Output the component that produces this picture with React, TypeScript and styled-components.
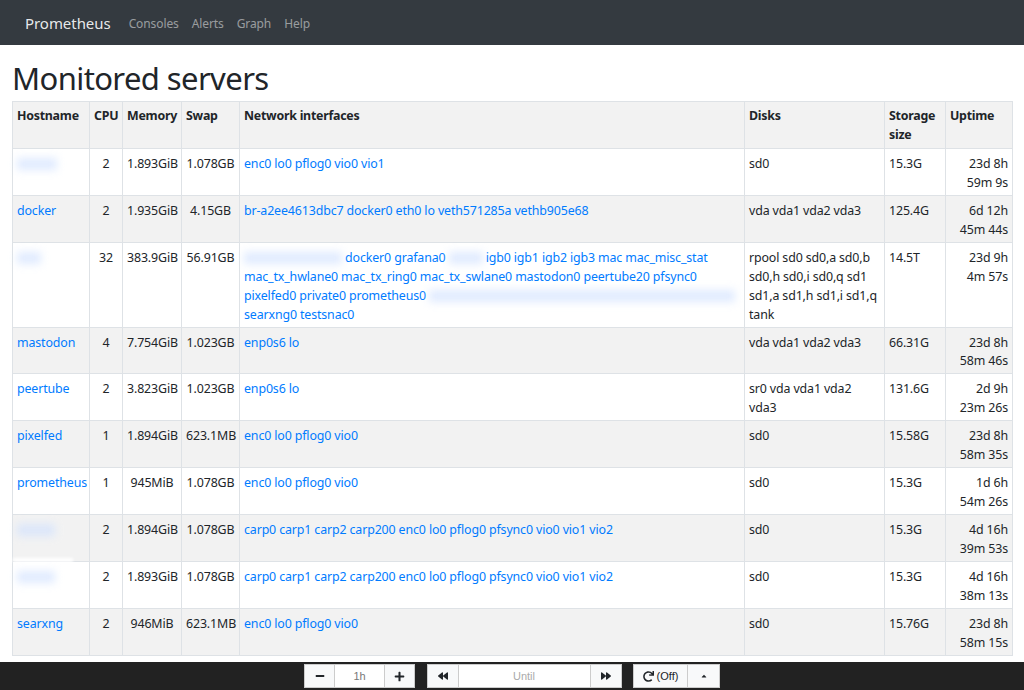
import React from "react";
import styled, { createGlobalStyle } from "styled-components";
import { FaBackward, FaCaretUp, FaForward, FaMinus, FaPlus, FaRedo } from "react-icons/fa";

const GlobalStyle = createGlobalStyle`
    html, body {
        margin: 0;
        padding: 0;
        background: #fff;
    }
    body {
        font-family: "Noto Sans", "Open Sans", sans-serif;
        font-size: 12.4px;
        letter-spacing: -0.13px;
        line-height: 18.95px;
        color: #212529;
    }
`;

const Page = styled.div`
    height: 690px;
    display: flex;
    flex-direction: column;
    overflow: hidden;
`;

const Navbar = styled.nav`
    flex: 0 0 45px;
    box-sizing: border-box;
    background: #343a40;
    display: flex;
    align-items: center;
    padding: 3px 25px 0;
`;

const Brand = styled.a`
    color: rgba(255, 255, 255, 0.9);
    font-size: 15px;
    letter-spacing: -0.05px;
    text-decoration: none;
    margin-right: 18px;
    padding-bottom: 1px;
`;

const NavLink = styled.a`
    color: rgba(255, 255, 255, 0.5);
    font-size: 12px;
    letter-spacing: -0.1px;
    text-decoration: none;
    margin-right: 13px;
`;

const Main = styled.main`
    flex: 1;
    min-height: 0;
    padding: 0 12px;
`;

const Title = styled.h1`
    margin: 0;
    height: 56px;
    font-size: 31px;
    letter-spacing: -0.6px;
    font-weight: 400;
    line-height: 66px;
`;

const Table = styled.table`
    width: 1000px;
    table-layout: fixed;
    border-collapse: collapse;
    border: 1px solid #dee2e6;

    tbody tr:nth-child(even) {
        background: #f2f2f2;
    }
`;

const HeadRow = styled.tr`
    background: #f2f2f2;
`;

const Th = styled.th`
    padding: 5px 4px 3px;
    border: 1px solid #dee2e6;
    text-align: left;
    vertical-align: top;
    font-weight: 700;
    letter-spacing: -0.25px;
`;

const Td = styled.td<{ $align?: string }>`
    position: relative;
    padding: 6px 4px 2px;
    border: 1px solid #dee2e6;
    vertical-align: top;
    text-align: ${(p) => p.$align || "left"};
`;

const Link = styled.a`
    color: #007bff;
    text-decoration: none;
`;

const Blur = styled.span<{ $width: number }>`
    display: inline-block;
    width: ${(p) => p.$width}px;
    height: 12px;
    vertical-align: -2px;
    background: #cfe0ff;
    filter: blur(4px);
    opacity: 0.65;
`;

const Smear = styled.div`
    position: absolute;
    top: -4px;
    left: 0;
    width: 60px;
    height: 4px;
    background: #fff;
    filter: blur(1.5px);
`;

const Footer = styled.footer`
    flex: 0 0 28px;
    box-sizing: border-box;
    background: #222;
    display: flex;
    justify-content: center;
    gap: 11.5px;
    padding-top: 2px;
    font-family: "Liberation Sans", Arial, sans-serif;
    letter-spacing: 0;
`;

const Group = styled.div`
    display: flex;
    height: 22px;
    border: 1px solid #ccc;
`;

const GroupButton = styled.button<{ $width: number }>`
    width: ${(p) => p.$width}px;
    padding: 0;
    border: 0;
    border-left: 1px solid #ccc;
    background: #f8f9fa;
    color: #212529;
    font: inherit;
    font-size: 11px;
    display: flex;
    align-items: center;
    justify-content: center;
    gap: 3px;

    &:first-child {
        border-left: 0;
    }
`;

const GroupField = styled.div<{ $width: number; $faint?: boolean }>`
    width: ${(p) => p.$width}px;
    border-left: 1px solid #ccc;
    background: #fff;
    color: ${(p) => (p.$faint ? "#aaa" : "#777")};
    font-size: 11px;
    text-align: center;
    line-height: 22px;
`;

type Item = string | number;

interface Server {
    host: string | number;
    cpu: number;
    memory: string;
    swap: string;
    interfaces: Item[];
    disks: string;
    storage: string;
    uptime: [string, string];
    smear?: boolean;
}

const split = (s: string): Item[] => s.split(" ");

const servers: Server[] = [
    { host: 40, cpu: 2, memory: "1.893GiB", swap: "1.078GB", interfaces: split("enc0 lo0 pflog0 vio0 vio1"), disks: "sd0", storage: "15.3G", uptime: ["23d 8h", "59m 9s"] },
    { host: "docker", cpu: 2, memory: "1.935GiB", swap: "4.15GB", interfaces: split("br-a2ee4613dbc7 docker0 eth0 lo veth571285a vethb905e68"), disks: "vda vda1 vda2 vda3", storage: "125.4G", uptime: ["6d 12h", "45m 44s"] },
    {
        host: 24, cpu: 32, memory: "383.9GiB", swap: "56.91GB",
        interfaces: [98, "docker0", "grafana0", 34, ...split("igb0 igb1 igb2 igb3 mac mac_misc_stat mac_tx_hwlane0 mac_tx_ring0 mac_tx_swlane0 mastodon0 peertube20 pfsync0 pixelfed0 private0 prometheus0"), 306, "searxng0", "testsnac0"],
        disks: "rpool sd0 sd0,a sd0,b sd0,h sd0,i sd0,q sd1 sd1,a sd1,h sd1,i sd1,q tank", storage: "14.5T", uptime: ["23d 9h", "4m 57s"],
    },
    { host: "mastodon", cpu: 4, memory: "7.754GiB", swap: "1.023GB", interfaces: split("enp0s6 lo"), disks: "vda vda1 vda2 vda3", storage: "66.31G", uptime: ["23d 8h", "58m 46s"] },
    { host: "peertube", cpu: 2, memory: "3.823GiB", swap: "1.023GB", interfaces: split("enp0s6 lo"), disks: "sr0 vda vda1 vda2 vda3", storage: "131.6G", uptime: ["2d 9h", "23m 26s"] },
    { host: "pixelfed", cpu: 1, memory: "1.894GiB", swap: "623.1MB", interfaces: split("enc0 lo0 pflog0 vio0"), disks: "sd0", storage: "15.58G", uptime: ["23d 8h", "58m 35s"] },
    { host: "prometheus", cpu: 1, memory: "945MiB", swap: "1.078GB", interfaces: split("enc0 lo0 pflog0 vio0"), disks: "sd0", storage: "15.3G", uptime: ["1d 6h", "54m 26s"] },
    { host: 38, cpu: 2, memory: "1.894GiB", swap: "1.078GB", interfaces: split("carp0 carp1 carp2 carp200 enc0 lo0 pflog0 pfsync0 vio0 vio1 vio2"), disks: "sd0", storage: "15.3G", uptime: ["4d 16h", "39m 53s"] },
    { host: 38, smear: true, cpu: 2, memory: "1.893GiB", swap: "1.078GB", interfaces: split("carp0 carp1 carp2 carp200 enc0 lo0 pflog0 pfsync0 vio0 vio1 vio2"), disks: "sd0", storage: "15.3G", uptime: ["4d 16h", "38m 13s"] },
    { host: "searxng", cpu: 2, memory: "946MiB", swap: "623.1MB", interfaces: split("enc0 lo0 pflog0 vio0"), disks: "sd0", storage: "15.76G", uptime: ["23d 8h", "58m 15s"] },
];

const columnWidths = [77, 33, 59, 58, 505, 140, 61, 67];

const Name = ({ item }: { item: Item }) =>
    typeof item === "number" ? <Blur $width={item} /> : <Link href="#">{item}</Link>;

const App = () => (
    <Page>
        <GlobalStyle />
        <Navbar>
            <Brand href="#">Prometheus</Brand>
            <NavLink href="#">Consoles</NavLink>
            <NavLink href="#">Alerts</NavLink>
            <NavLink href="#">Graph</NavLink>
            <NavLink href="#">Help</NavLink>
        </Navbar>
        <Main>
            <Title>Monitored servers</Title>
            <Table>
                <colgroup>
                    {columnWidths.map((w, i) => <col key={i} width={w} />)}
                </colgroup>
                <thead>
                    <HeadRow>
                        <Th>Hostname</Th>
                        <Th>CPU</Th>
                        <Th>Memory</Th>
                        <Th>Swap</Th>
                        <Th>Network interfaces</Th>
                        <Th>Disks</Th>
                        <Th>Storage size</Th>
                        <Th>Uptime</Th>
                    </HeadRow>
                </thead>
                <tbody>
                    {servers.map((s, i) => (
                        <tr key={i}>
                            <Td>
                                {s.smear && <Smear />}
                                <Name item={s.host} />
                            </Td>
                            <Td $align="center">{s.cpu}</Td>
                            <Td $align="center">{s.memory}</Td>
                            <Td $align="center">{s.swap}</Td>
                            <Td>
                                {s.interfaces.map((n, j) => (
                                    <React.Fragment key={j}>
                                        <Name item={n} />{" "}
                                    </React.Fragment>
                                ))}
                            </Td>
                            <Td>{s.disks}</Td>
                            <Td>{s.storage}</Td>
                            <Td $align="right">{s.uptime[0]}<br />{s.uptime[1]}</Td>
                        </tr>
                    ))}
                </tbody>
            </Table>
        </Main>
        <Footer>
            <Group>
                <GroupButton $width={29}><FaMinus size={10} /></GroupButton>
                <GroupField $width={49}>1h</GroupField>
                <GroupButton $width={30}><FaPlus size={11} /></GroupButton>
            </Group>
            <Group>
                <GroupButton $width={30}><FaBackward size={10} /></GroupButton>
                <GroupField $width={131} $faint>Until</GroupField>
                <GroupButton $width={31}><FaForward size={10} /></GroupButton>
            </Group>
            <Group>
                <GroupButton $width={53}><FaRedo size={11} />(Off)</GroupButton>
                <GroupButton $width={32}><FaCaretUp size={8} /></GroupButton>
            </Group>
        </Footer>
    </Page>
);

export default App;
